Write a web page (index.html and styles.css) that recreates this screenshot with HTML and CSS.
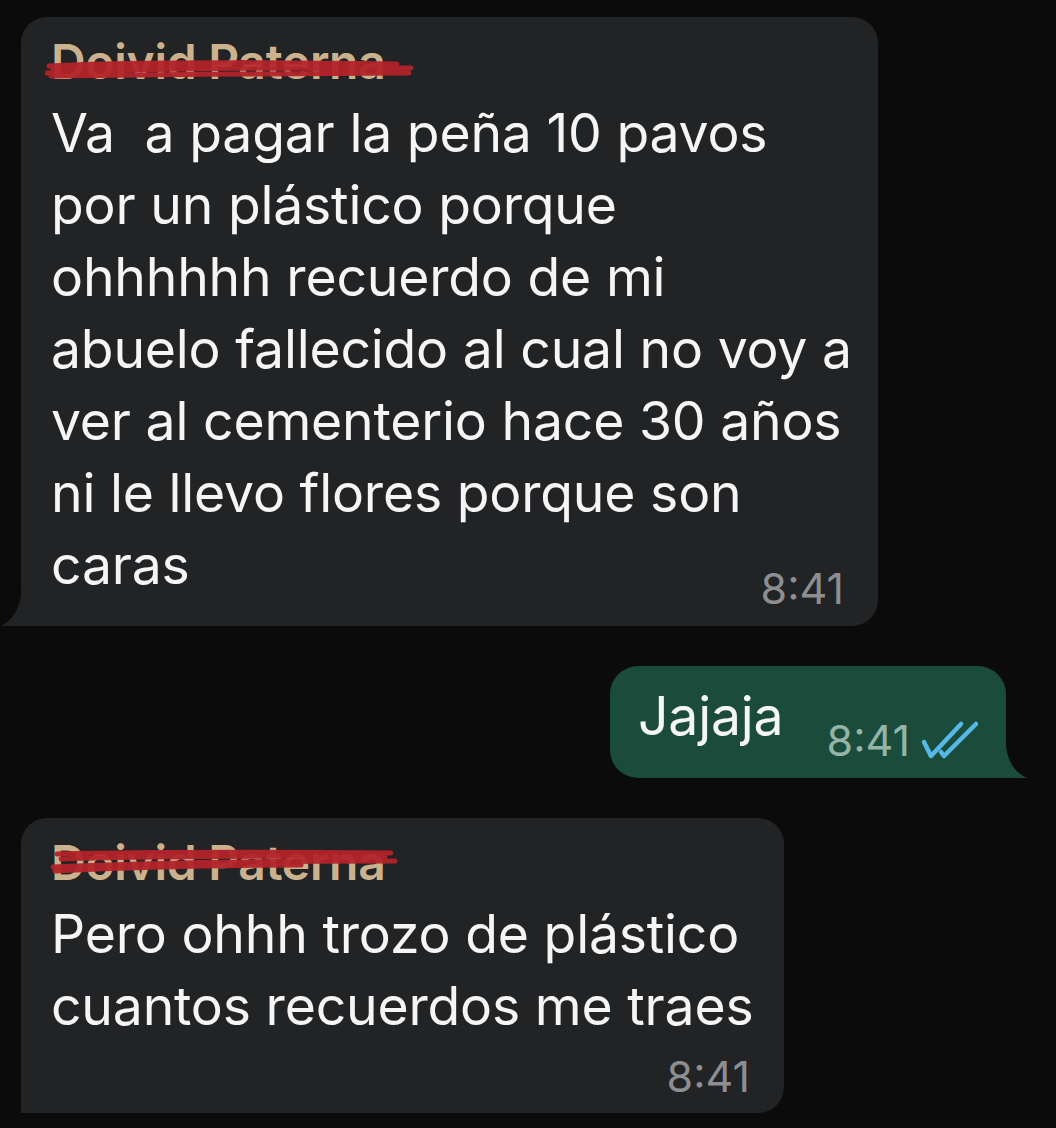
FILE: index.html
```html
<!DOCTYPE html>
<html lang="es">
<head>
<meta charset="utf-8">
<title>Chat</title>
<link rel="stylesheet" href="styles.css">
</head>
<body>
<main class="chat">
  <div class="bubble in b1">
    <div class="name">Doivid Paterna
      <svg class="scribble" viewBox="0 0 370 24" width="370" height="24">
        <path d="M4 10 C80 6 200 6 352 8" />
        <path d="M2 17 C90 13 220 11 366 12" />
        <path d="M8 13 C100 10 250 12 358 14" />
        <path d="M6 20 C120 18 260 18 364 17" />
      </svg>
    </div>
    <div class="text">Va&nbsp; a pagar la peña 10 pavos<br>por un plástico porque<br>ohhhhhh recuerdo de mi<br>abuelo fallecido al cual no voy a<br>ver al cementerio hace 30 años<br>ni le llevo flores porque son<br>caras</div>
    <div class="meta overlap"><span class="time">8:41</span></div>
    <svg class="tail-in" viewBox="0 0 22 50" width="22" height="50"><path d="M22 6 L22 8 C21 30 15 43 1 50 L22 50 Z"/></svg>
  </div>

  <div class="bubble out">
    <div class="text">Jajaja</div>
    <div class="meta-out">
      <span class="time">8:41</span>
      <svg class="ticks" viewBox="0 0 60 40" width="60" height="40">
        <path d="M4 22 L11 36 L41 4" />
        <path d="M21 32 L24 36 L56 4" />
      </svg>
    </div>
    <svg class="tail-out" viewBox="0 0 22 50" width="22" height="50"><path d="M0 6 L0 8 C1 30 7 43 22 50 L0 50 Z"/></svg>
  </div>

  <div class="bubble in b3">
    <div class="name">Doivid Paterna
      <svg class="scribble s2" viewBox="0 0 350 30" width="350" height="30">
        <path d="M6 9 C90 7 220 7 340 8" />
        <path d="M2 22 C100 18 230 16 344 16" />
        <path d="M10 14 C110 11 240 11 334 12" />
        <path d="M4 26 C80 22 160 20 250 20" />
      </svg>
    </div>
    <div class="text">Pero ohhh trozo de plástico<br>cuantos recuerdos me traes</div>
    <div class="meta"><span class="time">8:41</span></div>
  </div>
</main>
</body>
</html>
```

FILE: styles.css
```css
html, body {
  margin: 0;
  padding: 0;
  background: #0b0b0b;
}
body {
  width: 1056px;
  height: 1128px;
  overflow: hidden;
  font-family: Inter, "Noto Sans", "Liberation Sans", sans-serif;
  color: #f5f5f5;
}
.chat {
  display: flex;
  flex-direction: column;
  padding-top: 17px;
}
.bubble {
  position: relative;
  box-sizing: border-box;
}
.in {
  background: #222325;
  margin-left: 21px;
  border-radius: 26px 26px 26px 0;
  padding: 15px 34px 18px 30px;
}
.b1 { width: 857px; }
.b3 { width: 763px; margin-top: 40px; padding-bottom: 17px; }
.name {
  position: relative;
  font-size: 48px;
  font-weight: 600;
  line-height: 60px;
  color: #cbb28e;
  letter-spacing: -0.3px;
  margin-bottom: 5px;
}
.scribble {
  position: absolute;
  left: -6px;
  top: 24px;
  fill: none;
  stroke: #b3232a;
  stroke-width: 5;
  stroke-linecap: round;
  opacity: 0.95;
}
.scribble.s2 { left: 0; top: 12px; }
.text {
  font-size: 53.5px;
  line-height: 72px;
  letter-spacing: -0.2px;
  white-space: nowrap;
}
.meta {
  display: flex;
  justify-content: flex-end;
  margin-top: 14px;
}
.meta.overlap { margin-top: -33px; }
.time {
  font-size: 43px;
  line-height: 40px;
  color: #8d8e92;
}
.tail-in {
  position: absolute;
  left: -21px;
  bottom: 0;
  fill: #222325;
}
.out {
  align-self: flex-start;
  margin-left: 610px;
  margin-top: 40px;
  width: 396px;
  background: #1b4c3b;
  border-radius: 28px 28px 0 28px;
  display: flex;
  padding: 14px 26px 18px 28px;
}
.out .time { color: #95b4a8; }
.meta-out {
  display: flex;
  align-items: center;
  margin-left: auto;
  margin-top: 40px;
  height: 40px;
  gap: 10px;
}
.ticks {
  flex-shrink: 0;
  fill: none;
  stroke: #55b8e6;
  stroke-width: 4.5;
  stroke-linecap: round;
  stroke-linejoin: round;
}
.tail-out {
  position: absolute;
  right: -21px;
  bottom: 0;
  fill: #1b4c3b;
}
```
